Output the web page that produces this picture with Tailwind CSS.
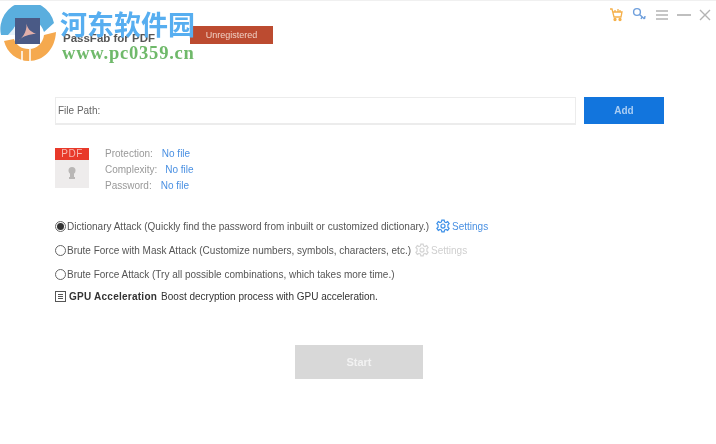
<!DOCTYPE html>
<html>
<head>
<meta charset="utf-8">
<script src="https://cdn.jsdelivr.net/npm/@tailwindcss/browser@4"></script>
</head>
<body class="bg-white">
<div class="relative w-[716px] h-[444px] overflow-hidden bg-white font-['Liberation_Sans',sans-serif] text-[10px] text-[#555] blur-[0.4px]">
  <!-- title bar -->
  <div class="h-[97px] border-t border-[#f0f0f0] relative">
    <div class="flex items-start pl-[63px] pt-[25px]">
      <span class="mt-[4px] w-[127px] text-[11.5px] leading-[16px] font-bold text-[#555]">PassFab for PDF</span>
      <span class="w-[83px] h-[18px] bg-[#bc4b30] text-[#f0d0c4] text-[9px] leading-[18px] text-center">Unregistered</span>
    </div>
    <div class="absolute right-[5px] top-[6px] flex items-center gap-[8px]">
      <svg width="15" height="15" viewBox="0 0 15 15" fill="none" stroke="#f5b04a" stroke-width="1.3"><path d="M1 2h2l2 8h7l1-5H4"/><path d="M6 5V3M9 5V2M11 5V3"/><circle cx="6" cy="12.5" r="1" fill="#f5b04a"/><circle cx="11" cy="12.5" r="1" fill="#f5b04a"/></svg>
      <svg width="15" height="15" viewBox="0 0 15 15" fill="none" stroke="#6f9fdc" stroke-width="1.4"><circle cx="5" cy="5" r="3.4"/><path d="M7.5 7.5l5 4.5M10 10l-1 2M12.5 12l.5-3"/></svg>
      <svg width="14" height="12" viewBox="0 0 14 12" stroke="#b4b4b4" stroke-width="1.7"><path d="M1 2h12M1 6h12M1 10h12"/></svg>
      <svg width="14" height="12" viewBox="0 0 14 12" stroke="#b4b4b4" stroke-width="1.7"><path d="M0 6h14"/></svg>
      <svg width="12" height="12" viewBox="0 0 12 12" stroke="#b4b4b4" stroke-width="1.4"><path d="M1 1l10 10M11 1L1 11"/></svg>
    </div>
  </div>

  <!-- file row -->
  <div class="flex pl-[55px] gap-[8px]">
    <div class="w-[521px] h-[28px] border border-[#ececec] border-b-2 px-[2px] leading-[25px] text-[#666]">File Path:</div>
    <div class="w-[80px] h-[27px] bg-[#1275dd] text-[#a9cdf3] font-bold text-center leading-[27px]">Add</div>
  </div>

  <!-- pdf info -->
  <div class="flex pl-[55px] mt-[23px] gap-[16px]">
    <div class="w-[34px] h-[40px] bg-[#eeecec] flex flex-col items-center">
      <div class="w-full h-[12px] bg-[#e8392a] text-[#f6b9b2] text-[10px] leading-[12px] text-center tracking-[0.5px]">PDF</div>
      <svg class="mt-[7px]" width="8" height="13" viewBox="0 0 8 13" fill="#b9b7b6"><circle cx="4" cy="3.5" r="3.5"/><rect x="2" y="4" width="4" height="6"/><rect x="1" y="10" width="6" height="2"/></svg>
    </div>
    <div class="flex flex-col leading-[16px] -mt-[2px] text-[#999]">
      <div>Protection:<span class="ml-[9px] text-[#4a90e2]">No file</span></div>
      <div>Complexity:<span class="ml-[8px] text-[#4a90e2]">No file</span></div>
      <div>Password:<span class="ml-[9px] text-[#4a90e2]">No file</span></div>
    </div>
  </div>

  <!-- options -->
  <div class="flex flex-col pl-[55px] mt-[20px]">
    <div class="flex items-center h-[24px]">
      <span class="w-[11px] h-[11px] rounded-full border border-[#666] flex items-center justify-center shrink-0"><span class="w-[7px] h-[7px] rounded-full bg-[#333]"></span></span>
      <span class="ml-[1px] w-[369px] whitespace-nowrap">Dictionary Attack (Quickly find the password from inbuilt or customized dictionary.)</span>
      <svg width="14" height="14" viewBox="0 0 24 24" fill="none" stroke="#3b8fe8" stroke-width="2"><circle cx="12" cy="12" r="3.5"/><path d="M10 2h4l.6 3 2.6 1.1L20 4.5 22.5 8l-2.2 2 .2 2-.2 2 2.2 2L20 19.5l-2.8-1.6-2.6 1.1-.6 3h-4l-.6-3-2.600-1.100L4 19.500 1.500 16l2.200-2-.2-2 .2-2-2.200-2L4 4.500l2.800 1.600L9.400 5z"/></svg>
      <span class="ml-[2px] text-[#4a90e2]">Settings</span>
    </div>
    <div class="flex items-center h-[24px]">
      <span class="w-[11px] h-[11px] rounded-full border border-[#666] shrink-0"></span>
      <span class="ml-[1px] w-[348px] whitespace-nowrap">Brute Force with Mask Attack (Customize numbers, symbols, characters, etc.)</span>
      <svg width="14" height="14" viewBox="0 0 24 24" fill="none" stroke="#d4d4d4" stroke-width="2"><circle cx="12" cy="12" r="3.5"/><path d="M10 2h4l.6 3 2.6 1.1L20 4.5 22.5 8l-2.200 2 .2 2-.2 2 2.200 2L20 19.500l-2.800-1.600-2.600 1.100-.6 3h-4l-.6-3-2.600-1.100L4 19.500 1.500 16l2.200-2-.2-2 .2-2-2.200-2L4 4.500l2.800 1.600L9.400 5z"/></svg>
      <span class="ml-[2px] text-[#cfcfcf]">Settings</span>
    </div>
    <div class="flex items-center h-[24px]">
      <span class="w-[11px] h-[11px] rounded-full border border-[#666] shrink-0"></span>
      <span class="ml-[1px] whitespace-nowrap">Brute Force Attack (Try all possible combinations, which takes more time.)</span>
    </div>
    <div class="flex items-center h-[20px] text-[#333]">
      <span class="w-[11px] h-[11px] border border-[#555] flex flex-col justify-center gap-[1px] px-[2px] shrink-0"><span class="h-px bg-[#555]"></span><span class="h-px bg-[#555]"></span><span class="h-px bg-[#555]"></span></span>
      <span class="ml-[3px] font-bold tracking-[0.25px]">GPU Acceleration</span>
      <span class="ml-[4px]">Boost decryption process with GPU acceleration.</span>
    </div>
  </div>

  <!-- start -->
  <div class="flex justify-center mt-[39px]">
    <div class="w-[128px] h-[34px] bg-[#d8d8d8] text-[#f2f2f2] text-[11px] font-bold text-center leading-[34px] ml-[2px]">Start</div>
  </div>

  <!-- watermark overlay -->
  <svg class="absolute left-0 top-[5px]" width="58" height="58" viewBox="0 0 58 58">
    <path d="M1 30A27 27 0 0 1 54 18L44 27C41 18 35 14 28 14 19 14 13 21 12 30Z" fill="#5aaede"/>
    <path d="M4 36c3 12 13 20 25 20 14 0 26-11 27-29L44 30c-1 8-7 14-15 14-8 0-13-4-15-10Z" fill="#f5a94e"/>
    <rect x="15" y="13" width="25" height="26" fill="#4a5a86"/>
    <path d="M18 36c6-4 10-12 8-20 1 8 4 10 10 13-7 0-13 2-18 7Z" fill="#f2b8ae" opacity=".9"/>
    <path d="M8 30l7-8v8Z" fill="#e6f2fa"/>
    <path d="M22 46v10M30 44v12" stroke="#fff" stroke-width="1.500"/>
  </svg>
  <div class="absolute left-[60px] top-[8px] font-['Noto_Sans_CJK_SC',sans-serif] font-bold text-[27px] leading-[32px] text-[#57aef0] whitespace-nowrap">河东软件园</div>
  <div class="absolute left-[62px] top-[43px] font-['Liberation_Serif',serif] font-bold text-[18.5px] leading-[20px] tracking-[0.8px] text-[#6fb96a] whitespace-nowrap">www.pc0359.cn</div>
</div>
</body>
</html>
